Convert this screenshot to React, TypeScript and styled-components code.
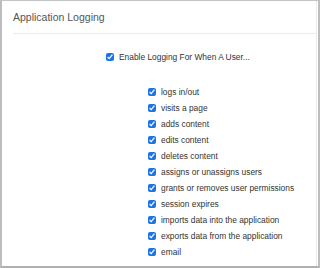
import React, { useState } from "react";
import styled, { createGlobalStyle } from "styled-components";

const events = [
  "logs in/out",
  "visits a page",
  "adds content",
  "edits content",
  "deletes content",
  "assigns or unassigns users",
  "grants or removes user permissions",
  "session expires",
  "imports data into the application",
  "exports data from the application",
  "email",
];

const ApplicationLogging = () => {
  const [enabled, setEnabled] = useState(true);
  const [checked, setChecked] = useState<boolean[]>(events.map(() => true));

  const toggle = (index: number) => {
    setChecked((prev) => prev.map((v, i) => (i === index ? !v : v)));
  };

  return (
    <Frame>
      <GlobalStyle />
      <Panel>
        <Header>
          <Title>Application Logging</Title>
        </Header>
        <Divider />
        <Body>
          <EnableRow>
            <Check
              type="checkbox"
              checked={enabled}
              onChange={() => setEnabled(!enabled)}
            />
            Enable Logging For When A User...
          </EnableRow>
          <List>
            {events.map((label, i) => (
              <Item key={label}>
                <Check
                  type="checkbox"
                  checked={checked[i]}
                  onChange={() => toggle(i)}
                />
                {label}
              </Item>
            ))}
          </List>
        </Body>
      </Panel>
    </Frame>
  );
};

const GlobalStyle = createGlobalStyle`
  body {
    margin: 0;
    background: #fff;
    font-family: "Liberation Sans", Arial, sans-serif;
  }
`;

const Frame = styled.div`
  width: 320px;
  height: 268px;
  box-sizing: border-box;
  border-top: 1px solid #c4c4c4;
  border-left: 2px solid #bdbdbd;
  border-right: 2px solid #bdbdbd;
  border-bottom: 2px solid #b0b0b0;
  padding: 0 1px 0 2px;
  background: #fff;
`;

const Panel = styled.div`
  height: 100%;
  box-sizing: border-box;
  border-right: 1px solid #ececec;
  display: flex;
  flex-direction: column;
`;

const Header = styled.div`
  height: 32px;
  padding-left: 9px;
  display: flex;
  align-items: center;
`;

const Title = styled.h2`
  margin: 0;
  font-size: 10.5px;
  font-weight: normal;
  color: #555;
  line-height: 14px;
`;

const Divider = styled.div`
  height: 1px;
  margin-left: 9px;
  background: #ececec;
`;

const Body = styled.div`
  padding-top: 15px;
  padding-left: 102px;
`;

const EnableRow = styled.label`
  display: flex;
  align-items: center;
  gap: 5px;
  height: 16px;
  font-size: 8.4px;
  color: #333;
`;

const List = styled.div`
  display: flex;
  flex-direction: column;
  margin-top: 19px;
  padding-left: 42px;
`;

const Item = styled.label`
  display: flex;
  align-items: center;
  gap: 5px;
  height: 16px;
  font-size: 8.4px;
  color: #333;
`;

const Check = styled.input`
  width: 8px;
  height: 8px;
  margin: 0;
  accent-color: #1a73e8;
`;

export default ApplicationLogging;
